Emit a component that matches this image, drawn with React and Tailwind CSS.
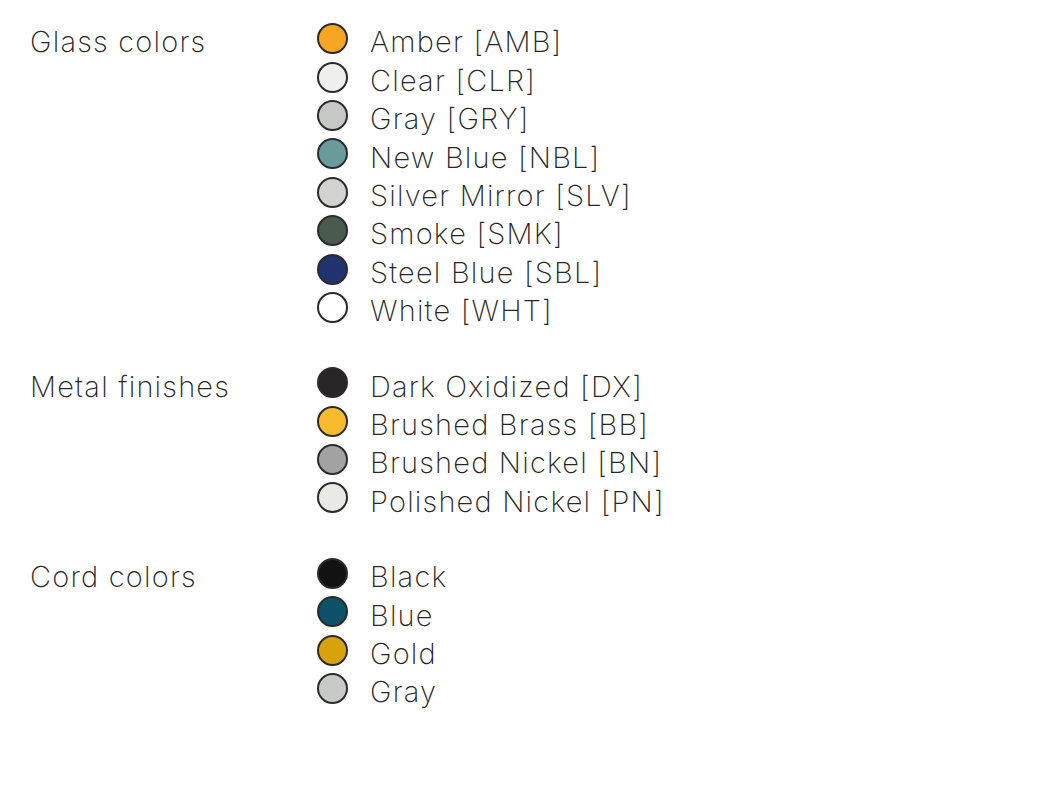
import React from 'react';

const sections = [
  {
    title: 'Glass colors',
    items: [
      { name: 'Amber [AMB]', color: 'bg-[#f6a623]' },
      { name: 'Clear [CLR]', color: 'bg-[#efefed]' },
      { name: 'Gray [GRY]', color: 'bg-[#c6c8c5]' },
      { name: 'New Blue [NBL]', color: 'bg-[#6a9b9c]' },
      { name: 'Silver Mirror [SLV]', color: 'bg-[#d2d2d0]' },
      { name: 'Smoke [SMK]', color: 'bg-[#4a5a4f]' },
      { name: 'Steel Blue [SBL]', color: 'bg-[#22346f]' },
      { name: 'White [WHT]', color: 'bg-white' },
    ],
  },
  {
    title: 'Metal finishes',
    items: [
      { name: 'Dark Oxidized [DX]', color: 'bg-[#2a2627]' },
      { name: 'Brushed Brass [BB]', color: 'bg-[#f8bb30]' },
      { name: 'Brushed Nickel [BN]', color: 'bg-[#a2a2a2]' },
      { name: 'Polished Nickel [PN]', color: 'bg-[#e9e9e5]' },
    ],
  },
  {
    title: 'Cord colors',
    items: [
      { name: 'Black', color: 'bg-[#121212]' },
      { name: 'Blue', color: 'bg-[#0d5268]' },
      { name: 'Gold', color: 'bg-[#d8a20d]' },
      { name: 'Gray', color: 'bg-[#c8cac7]' },
    ],
  },
];

export default function App() {
  return (
    <div className="min-h-[795px] w-full bg-white pt-[23px] pl-[30px] text-[#262626] font-['Inter',sans-serif] font-[250]">
      <div className="flex flex-col gap-[37px]">
        {sections.map((section) => (
          <div key={section.title} className="flex">
            <div className="w-[287px] h-[38.4px] flex items-center text-[29px] tracking-[1.2px]">
              {section.title}
            </div>
            <ul className="flex flex-col">
              {section.items.map((item) => (
                <li key={item.name} className="h-[38.4px] flex items-center gap-[22px]">
                  <span className={`w-[31px] h-[31px] -mt-[7px] rounded-full border-2 border-[#2b2b2b] shrink-0 ${item.color}`} />
                  <span className="text-[29px] tracking-[1.2px]">{item.name}</span>
                </li>
              ))}
            </ul>
          </div>
        ))}
      </div>
    </div>
  );
}
